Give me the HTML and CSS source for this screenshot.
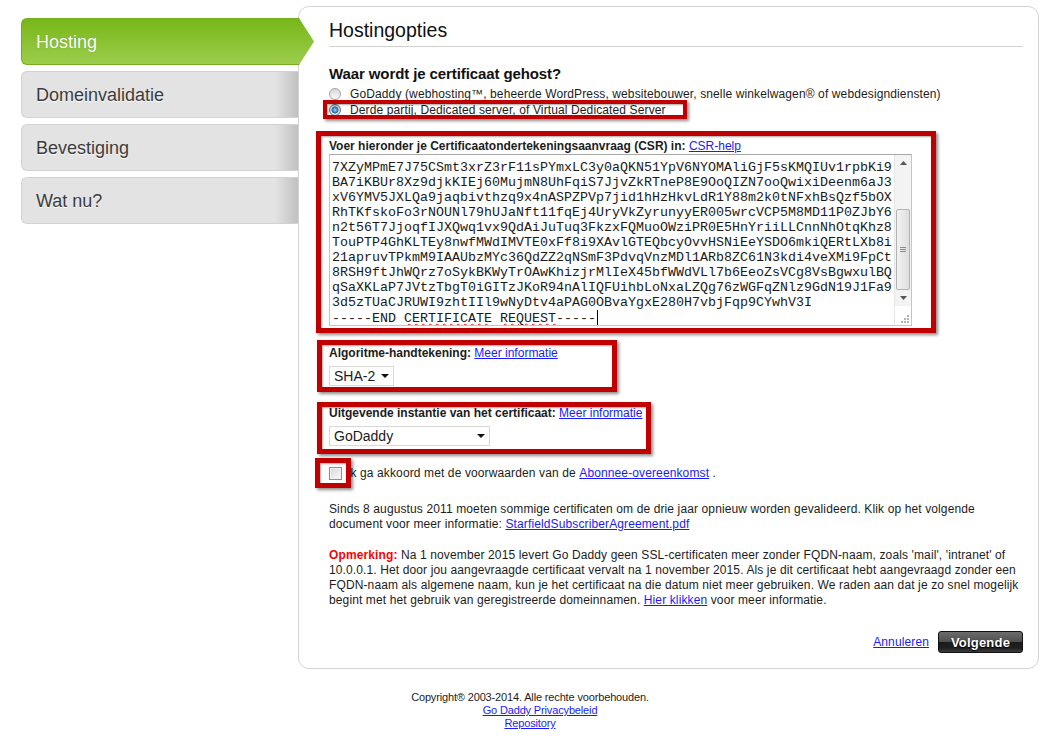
FILE: index.html
```html
<!DOCTYPE html>
<html lang="nl">
<head>
  <title>Hostingopties</title>
  <meta charset="UTF-8" />
  <meta name="viewport" content="width=device-width" />
  <link rel="stylesheet" href="styles.css">
</head>
<body>
  <div class="wrap">
    <div class="layout">
      <ul class="steps">
        <li class="step active">Hosting</li>
        <li class="step">Domeinvalidatie</li>
        <li class="step">Bevestiging</li>
        <li class="step">Wat nu?</li>
      </ul>

      <main class="panel">
        <h1>Hostingopties</h1>

        <h2>Waar wordt je certificaat gehost?</h2>
        <div class="options">
          <label class="option"><input type="radio" name="host">GoDaddy (webhosting™, beheerde WordPress, websitebouwer, snelle winkelwagen® of webdesigndiensten)</label>
          <label class="option"><input type="radio" name="host" checked>Derde partij, Dedicated server, of Virtual Dedicated Server<span class="mark mark-radio"></span></label>
        </div>

        <div class="field field-csr">
          <div class="field-label"><b>Voer hieronder je Certificaatondertekeningsaanvraag (CSR) in:</b> <a href="#">CSR-help</a></div>
          <div class="csr-box">
            <div class="csr-text">7XZyMPmE7J75CSmt3xrZ3rF11sPYmxLC3y0aQKN51YpV6NYOMAliGjF5sKMQIUv1rpbKi9
BA7iKBUr8Xz9djkKIEj60MujmN8UhFqiS7JjvZkRTneP8E9OoQIZN7ooQwixiDeenm6aJ3
xV6YMV5JXLQa9jaqbivthzq9x4nASPZPVp7jid1hHzHkvLdR1Y88m2k0tNFxhBsQzf5bOX
RhTKfskoFo3rNOUNl79hUJaNft11fqEj4UryVkZyrunyyER005wrcVCP5M8MD11P0ZJbY6
n2t56T7JjoqfIJXQwq1vx9QdAiJuTuq3FkzxFQMuoOWziPR0E5HnYriiLLCnnNhOtqKhz8
TouPTP4GhKLTEy8nwfMWdIMVTE0xFf8i9XAvlGTEQbcyOvvHSNiEeYSDO6mkiQERtLXb8i
21apruvTPkmM9IAAUbzMYc36QdZZ2qNSmF3PdvqVnzMDl1ARb8ZC61N3kdi4veXMi9FpCt
8RSH9ftJhWQrz7oSykBKWyTrOAwKhizjrMlIeX45bfWWdVLl7b6EeoZsVCg8VsBgwxulBQ
qSaXKLaP7JVtzTbgT0iGITzJKoR94nAlIQFUihbLoNxaLZQg76zWGFqZNlz9GdN19J1Fa9
3d5zTUaCJRUWI9zhtIIl9wNyDtv4aPAG0OBvaYgxE280H7vbjFqp9CYwhV3I
-----END <span class="typo">CERTIFICATE</span> <span class="typo">REQUEST</span>-----<span class="caret"></span></div>
            <div class="scrollbar">
              <span class="sb-btn"><svg width="7" height="4" viewBox="0 0 7 4"><path d="M0 4h7L3.5 0z" fill="#555"/></svg></span>
              <span class="sb-track"><span class="sb-thumb"><i></i><i></i><i></i></span></span>
              <span class="sb-btn"><svg width="7" height="4" viewBox="0 0 7 4"><path d="M0 0h7L3.5 4z" fill="#555"/></svg></span>
              <span class="sb-grip"><svg width="10" height="10" viewBox="0 0 10 10" fill="#b5b5b5"><rect x="8" y="2" width="2" height="2"/><rect x="5" y="5" width="2" height="2"/><rect x="8" y="5" width="2" height="2"/><rect x="2" y="8" width="2" height="2"/><rect x="5" y="8" width="2" height="2"/><rect x="8" y="8" width="2" height="2"/></svg></span>
            </div>
          </div>
          <span class="mark mark-csr"></span>
        </div>

        <div class="field field-algo">
          <div class="field-label"><b>Algoritme-handtekening:</b> <a href="#">Meer informatie</a></div>
          <div class="select select-sha"><span>SHA-2</span><svg width="8" height="4" viewBox="0 0 8 4"><path d="M0 0h8L4 4z" fill="#111"/></svg></div>
          <span class="mark mark-algo"></span>
        </div>

        <div class="field field-issuer">
          <div class="field-label"><b>Uitgevende instantie van het certificaat:</b> <a href="#">Meer informatie</a></div>
          <div class="select select-issuer"><span>GoDaddy</span><svg width="8" height="4" viewBox="0 0 8 4"><path d="M0 0h8L4 4z" fill="#111"/></svg></div>
          <span class="mark mark-issuer"></span>
        </div>

        <label class="agree"><input type="checkbox">Ik ga akkoord met de voorwaarden van de&nbsp;<a href="#">Abonnee-overeenkomst</a>&nbsp;.<span class="mark mark-check"></span></label>

        <p class="note">Sinds 8 augustus 2011 moeten sommige certificaten om de drie jaar opnieuw worden gevalideerd. Klik op het volgende document voor meer informatie: <a href="#">StarfieldSubscriberAgreement.pdf</a></p>

        <p class="note note-warn"><b class="warn">Opmerking:</b> Na 1 november 2015 levert Go Daddy geen SSL-certificaten meer zonder FQDN-naam, zoals 'mail', 'intranet' of 10.0.0.1. Het door jou aangevraagde certificaat vervalt na 1 november 2015. Als je dit certificaat hebt aangevraagd zonder een FQDN-naam als algemene naam, kun je het certificaat na die datum niet meer gebruiken. We raden aan dat je zo snel mogelijk begint met het gebruik van geregistreerde domeinnamen. <a href="#">Hier klikken</a> voor meer informatie.</p>

        <div class="actions">
          <a href="#">Annuleren</a>
          <button class="btn-next">Volgende</button>
        </div>
      </main>
    </div>

    <footer class="footer">
      <div>Copyright® 2003-2014. Alle rechte voorbehouden.</div>
      <div class="privacy"><a href="#">Go Daddy Privacybeleid</a></div>
      <div><a href="#">Repository</a></div>
    </footer>
  </div>
</body>
</html>
```

FILE: styles.css
```css
body {
  margin: 0;
  font-family: "Liberation Sans", Arial, sans-serif;
  font-size: 12px;
  color: #1c1c1c;
  background: #fff;
}

a {
  color: #1a1aff;
}

.wrap {
  width: 1018px;
  padding: 6px 0 0 21px;
}

.layout {
  display: flex;
  align-items: flex-start;
}

/* left steps */
.steps {
  list-style: none;
  margin: 12px 0 0;
  padding: 0;
  width: 278px;
  display: flex;
  flex-direction: column;
  gap: 6px;
}

.step {
  box-sizing: border-box;
  height: 47px;
  padding-left: 14px;
  padding-top: 1px;
  display: flex;
  align-items: center;
  font-size: 18px;
  color: #3a3a3a;
  text-shadow: 0 1px 0 #fff;
  border: 1px solid #d2d2d2;
  border-right: none;
  border-radius: 6px 0 0 6px;
  background: linear-gradient(to right, #e3e3e3 0, #e3e3e3 calc(100% - 24px), #bfbfbf 100%);
}

.step.active {
  position: relative;
  z-index: 2;
  width: 293px;
  color: #fff;
  text-shadow: 0 0 1px rgba(60, 100, 0, 0.5);
  border-color: #74ad1e;
  background: linear-gradient(#78b719, #9ccd4c);
  clip-path: polygon(0 0, 278px 0, 100% 50%, 278px 100%, 0 100%);
}

/* main panel */
.panel {
  position: relative;
  z-index: 1;
  box-sizing: border-box;
  width: 741px;
  margin-left: -1px;
  padding: 12px 12px 15px 30px;
  letter-spacing: 0.12px;
  background: #fff;
  border: 1px solid #d4d4d4;
  border-radius: 11px;
}

h1 {
  margin: 0 3px 0 0;
  padding-bottom: 5px;
  font-size: 19.5px;
  line-height: 22px;
  font-weight: normal;
  letter-spacing: 0;
  color: #111;
  border-bottom: 1px solid #d0d0d0;
}

h2 {
  margin: 18px 0 0;
  font-size: 15px;
  line-height: 17px;
  letter-spacing: -0.1px;
  color: #111;
}

.options {
  margin-top: 4px;
}

.option {
  position: relative;
  display: flex;
  align-items: center;
  height: 16px;
  gap: 9px;
}

input[type=radio] {
  appearance: none;
  margin: 0;
  width: 12px;
  height: 12px;
  border-radius: 50%;
  border: 1px solid #a3a3a3;
  background: linear-gradient(#d6d6d6, #fbfbfb);
}

input[type=radio]:checked {
  border-color: #5d6f80;
  background: radial-gradient(circle, #a8d6f8 0, #2f7cc4 2.5px, #1d5f9e 3.2px, transparent 3.8px), linear-gradient(#bdbdbd, #f0f0f0);
}

.field {
  position: relative;
  margin-top: 20px;
}

.field-csr {
  margin-top: 21px;
}

.field-label {
  line-height: 15px;
  letter-spacing: 0;
}

/* CSR textarea look */
.csr-box {
  display: flex;
  width: 583px;
  height: 172px;
  box-sizing: border-box;
  border: 1px solid #c4c4c4;
  border-top-color: #a8a8a8;
  background: #fff;
  letter-spacing: 0;
}

.csr-text {
  flex: 1;
  overflow: hidden;
  padding: 5px 0 0 2px;
  font-family: "Liberation Mono", "Courier New", monospace;
  font-size: 13.333px;
  line-height: 15px;
  white-space: pre;
  color: #1a1a1a;
}

.typo {
  text-decoration: underline wavy #e02020;
  text-decoration-thickness: 1px;
  text-underline-offset: 1px;
}

.caret {
  display: inline-block;
  width: 1px;
  height: 15px;
  margin-left: 1px;
  vertical-align: -3px;
  background: #000;
}

.scrollbar {
  width: 16px;
  display: flex;
  flex-direction: column;
  background: #f3f3f3;
  border-left: 1px solid #e6e6e6;
}

.sb-btn {
  height: 17px;
  display: flex;
  align-items: center;
  justify-content: center;
}

.sb-track {
  flex: 1;
}

.sb-thumb {
  margin: 37px 1px 0 1px;
  height: 81px;
  box-sizing: border-box;
  border: 1px solid #b2b2b2;
  border-radius: 2px;
  background: linear-gradient(to right, #f2f2f2, #dedede);
  display: flex;
  flex-direction: column;
  align-items: center;
  justify-content: center;
  gap: 1px;
}

.sb-thumb i {
  width: 6px;
  height: 1px;
  background: #8a8a8a;
}

.sb-grip {
  height: 17px;
  background: #fff;
  display: flex;
  align-items: flex-end;
  justify-content: flex-end;
  padding: 0 2px 2px 0;
}

/* fake selects */
.select {
  display: flex;
  align-items: center;
  justify-content: space-between;
  box-sizing: border-box;
  height: 20px;
  margin-top: 5px;
  padding: 0 4px 0 4px;
  font-size: 14px;
  letter-spacing: 0;
  color: #1a1a1a;
  border: 1px solid #d9d9d9;
  background: #fff;
}

.select-sha {
  width: 65px;
}

.select-issuer {
  width: 161px;
}

.agree {
  position: relative;
  display: flex;
  align-items: center;
  margin-top: 20px;
  line-height: 15px;
}

input[type=checkbox] {
  appearance: none;
  margin: 0 5px 0 0;
  width: 13px;
  height: 13px;
  border: 1px solid #8e8f8f;
  box-shadow: inset 0 0 0 1px #f1f1f1;
  background: linear-gradient(135deg, #d6d6d6, #fbfbfb);
}

.note {
  margin: 21px 0 0;
  line-height: 15px;
}

.note-warn {
  margin-top: 16px;
}

.warn {
  color: #ff0000;
}

.actions {
  display: flex;
  justify-content: flex-end;
  align-items: center;
  gap: 9px;
  margin: 23px 3px 0 0;
  line-height: 15px;
}

.btn-next {
  width: 85px;
  height: 22px;
  padding: 0;
  font-family: "Liberation Sans", Arial, sans-serif;
  font-size: 13px;
  font-weight: bold;
  letter-spacing: 0.2px;
  color: #fff;
  text-shadow: 0 1px 1px #000;
  border: 1px solid #111;
  border-radius: 3px;
  background: linear-gradient(#6c6c6c 0, #4e4e4e 50%, #1b1b1b 51%, #202020 80%, #3c3c3c 100%);
}

/* red annotation frames */
.mark {
  position: absolute;
  box-sizing: border-box;
  border: 5px solid #c00000;
  box-shadow: 2px 2px 3px rgba(0, 0, 0, 0.45), inset 1px 1px 2px rgba(0, 0, 0, 0.35);
  pointer-events: none;
}

.mark-radio {
  top: -2px;
  left: -6px;
  width: 364px;
  height: 19px;
  border-width: 4px;
}

.mark-csr {
  top: -8px;
  left: -13px;
  width: 620px;
  height: 202px;
}

.mark-algo {
  top: -6px;
  left: -12px;
  width: 300px;
  height: 52px;
}

.mark-issuer {
  top: -4px;
  left: -12px;
  width: 334px;
  height: 52px;
}

.mark-check {
  top: -8px;
  left: -14px;
  width: 36px;
  height: 30px;
}

/* footer */
.footer {
  margin-top: 22px;
  text-align: center;
  font-size: 11px;
  line-height: 13px;
  letter-spacing: -0.15px;
  color: #1c1c1c;
}

.footer .privacy {
  padding-left: 20px;
}
```
